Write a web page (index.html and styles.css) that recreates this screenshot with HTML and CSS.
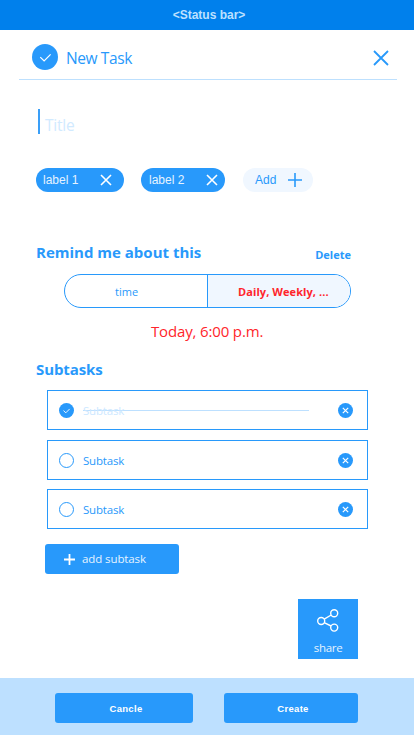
FILE: index.html
```html
<!DOCTYPE html>
<html lang="en">
<head>
<meta charset="utf-8">
<title>New Task</title>
<link rel="stylesheet" href="styles.css">
</head>
<body>
<div class="screen">
  <div class="status">&lt;Status bar&gt;</div>
  <header class="header">
    <svg class="logo" width="26" height="26" viewBox="0 0 26 26"><circle cx="13" cy="13" r="13" fill="#2899fb"/><path d="M8.3 13.2l3.8 3.8 6.5-6.7" fill="none" stroke="#fff" stroke-width="1.2"/></svg>
    <h1 class="heading">New Task</h1>
    <svg class="close" width="16" height="16" viewBox="0 0 16 16"><path d="M1 1l14 14M15 1L1 15" stroke="#2899fb" stroke-width="1.8"/></svg>
  </header>
  <main class="main">
    <div class="title-field"><span class="title-hint">Title</span></div>
    <div class="labels">
      <div class="chip first"><span class="chip-text">label 1</span><svg width="12" height="12" viewBox="0 0 12 12"><path d="M1 1l10 10M11 1L1 11" stroke="#fff" stroke-width="1.6"/></svg></div>
      <div class="chip second"><span class="chip-text">label 2</span><svg width="12" height="12" viewBox="0 0 12 12"><path d="M1 1l10 10M11 1L1 11" stroke="#fff" stroke-width="1.6"/></svg></div>
      <div class="chip add"><span class="chip-text">Add</span><svg width="14" height="14" viewBox="0 0 14 14"><path d="M0 7h14M7 0v14" stroke="#2899fb" stroke-width="1.6"/></svg></div>
    </div>
    <div class="remind">
      <h2 class="section-title remind-title">Remind me about this</h2>
      <span class="delete">Delete</span>
    </div>
    <div class="segments">
      <div class="segment time"><span class="time-text">time</span></div>
      <div class="segment repeat"><span class="repeat-text">Daily, Weekly, ...</span></div>
    </div>
    <div class="when"><span class="when-text">Today, 6:00 p.m.</span></div>
    <h2 class="section-title subtasks-title">Subtasks</h2>
    <div class="task done">
      <svg width="15" height="15" viewBox="0 0 15 15"><circle cx="7.5" cy="7.5" r="7.5" fill="#2899fb"/><path d="M4.5 7.6l2.3 2.2 3.9-3.9" fill="none" stroke="#fff" stroke-width=".9"/></svg>
      <span class="task-text">Subtask</span>
      <svg class="remove" width="15" height="15" viewBox="0 0 15 15"><circle cx="7.5" cy="7.5" r="7.5" fill="#2899fb"/><path d="M4.8 4.8l5.4 5.4M10.2 4.8l-5.4 5.4" stroke="#fff" stroke-width="1.2"/></svg>
    </div>
    <div class="task">
      <svg width="15" height="15" viewBox="0 0 15 15"><circle cx="7.5" cy="7.5" r="7" fill="none" stroke="#2899fb"/></svg>
      <span class="task-text">Subtask</span>
      <svg class="remove" width="15" height="15" viewBox="0 0 15 15"><circle cx="7.5" cy="7.5" r="7.5" fill="#2899fb"/><path d="M4.8 4.8l5.4 5.4M10.2 4.8l-5.4 5.4" stroke="#fff" stroke-width="1.2"/></svg>
    </div>
    <div class="task last">
      <svg width="15" height="15" viewBox="0 0 15 15"><circle cx="7.5" cy="7.5" r="7" fill="none" stroke="#2899fb"/></svg>
      <span class="task-text">Subtask</span>
      <svg class="remove" width="15" height="15" viewBox="0 0 15 15"><circle cx="7.5" cy="7.5" r="7.5" fill="#2899fb"/><path d="M4.8 4.8l5.4 5.4M10.2 4.8l-5.4 5.4" stroke="#fff" stroke-width="1.2"/></svg>
    </div>
    <div class="add-subtask">
      <svg width="11" height="11" viewBox="0 0 11 11"><path d="M0 5.5h11M5.5 0v11" stroke="#fff" stroke-width="1.8"/></svg>
      <span class="add-text">add subtask</span>
    </div>
    <div class="share">
      <svg width="22" height="23" viewBox="0 0 22 23"><g fill="none" stroke="#fff" stroke-width="1.4"><circle cx="4.2" cy="12" r="3.5"/><circle cx="17.2" cy="4.2" r="3.5"/><circle cx="17.2" cy="18.6" r="3.5"/><path d="M7.2 10.2l7-4.2M7.2 13.7l6.9 3.3"/></g></svg>
      <span class="share-text">share</span>
    </div>
  </main>
  <footer class="footer">
    <div class="button cancel">Cancle</div>
    <div class="button create">Create</div>
  </footer>
</div>
</body>
</html>
```

FILE: styles.css
```css
* { box-sizing: border-box; }
body { margin: 0; background: #fff; color: #2899fb; font-family: "Open Sans", "Noto Sans", sans-serif; }
h1, h2 { margin: 0; }
svg { display: block; flex: none; }
span, h1, h2 { white-space: nowrap; }
.screen { width: 414px; height: 735px; display: flex; flex-direction: column; overflow: hidden; }
.status { height: 30px; flex: none; background: #0080ec; color: #bde0ff; font: bold 12px/30px "Liberation Sans", sans-serif; text-align: center; padding-left: 4px; }
.header { height: 50px; flex: none; margin: 0 17.5px 0 18.5px; padding: 4px 7.5px 0 13.5px; display: flex; align-items: center; border-bottom: 1px solid #bde0fe; }
.heading { margin: 2px 0 0 8px; font-size: 15.5px; line-height: 22px; font-weight: 400; letter-spacing: -.4px; }
.close { margin: 2px 0 0 auto; }
.main { flex: 1; display: flex; flex-direction: column; }
.title-field { height: 25px; margin: 29px 0 0 38px; border-left: 2px solid #3a9ff8; padding-left: 5px; }
.title-hint { display: block; padding-top: 4px; color: #d1eaff; font-size: 15.5px; line-height: 24px; letter-spacing: -.25px; }
.labels { display: flex; height: 24px; margin: 34px 0 0 36px; }
.chip { display: flex; align-items: center; height: 24px; border-radius: 12px; background: #2899fb; color: #e5f3ff; padding: 0 12px 0 7px; justify-content: space-between; font: 12px/24px "Liberation Sans", sans-serif; }
.first { width: 87.5px; }
.second { width: 84px; margin-left: 17.5px; padding: 0 7px 0 8px; }
.add { width: 70px; margin-left: 18px; background: #f0f7ff; color: #2899fb; padding: 0 11.5px 0 12px; }
.remind { display: flex; justify-content: space-between; margin: 48px 63px 0 36px; height: 24px; }
.section-title { font-size: 15px; line-height: 24px; font-weight: 700; }
.delete { font-size: 11px; line-height: 30px; font-weight: 700; }
.segments { display: flex; width: 287px; height: 34px; margin: 10px 0 0 64px; border: 1px solid #2899fb; border-radius: 17px; overflow: hidden; font-size: 11px; line-height: 34px; }
.time { width: 142px; padding-left: 50px; }
.repeat { flex: 1; padding-left: 30px; border-left: 1px solid #2899fb; background: #f0f7ff; color: #ff252b; font-weight: 700; letter-spacing: .08px; }
.when { margin-top: 11px; height: 24px; padding-left: 151px; color: #ff252b; font-size: 15px; line-height: 24px; letter-spacing: -.15px; }
.subtasks-title { margin: 14px 0 0 36px; height: 24px; letter-spacing: -.1px; }
.task { display: flex; align-items: center; flex: none; width: 321px; height: 40px; margin: 10px 0 0 47px; border: 1px solid #2899fb; padding: 0 14.5px 0 11px; }
.task.done { margin-top: 9px; }
.task.last { margin-top: 9px; }
.task-text { margin: 2px 0 0 9px; font-size: 11.5px; line-height: 18px; letter-spacing: -.2px; }
.done .task-text { width: 225.5px; color: #cde8ff; background: linear-gradient(#bde0ff, #bde0ff) 0 8px / 100% 1px no-repeat; }
.remove { margin-left: auto; }
.add-subtask { display: flex; align-items: center; flex: none; width: 134px; height: 30px; margin: 15px 0 0 45px; border-radius: 3px; background: #2899fb; color: #e5f3ff; padding-left: 19px; }
.add-text { margin-left: 7px; font-size: 11.5px; line-height: 18px; letter-spacing: -.1px; }
.share { display: flex; flex-direction: column; align-items: center; flex: none; width: 60px; height: 60px; margin: 25px 0 0 298px; padding-top: 10px; background: #2899fb; color: #e5f3ff; }
.share-text { margin-top: 7px; font-size: 11.5px; line-height: 18px; letter-spacing: -.3px; }
.footer { display: flex; flex: none; height: 57px; padding: 15px 0 0 55px; gap: 31px; background: #bde0ff; }
.button { height: 30px; border-radius: 3px; background: #2899fb; color: #fff; text-align: center; font: bold 9.5px/31px "Liberation Sans", sans-serif; letter-spacing: .3px; }
.cancel { width: 138px; padding-left: 4px; }
.create { width: 134px; padding-left: 4px; }
```
